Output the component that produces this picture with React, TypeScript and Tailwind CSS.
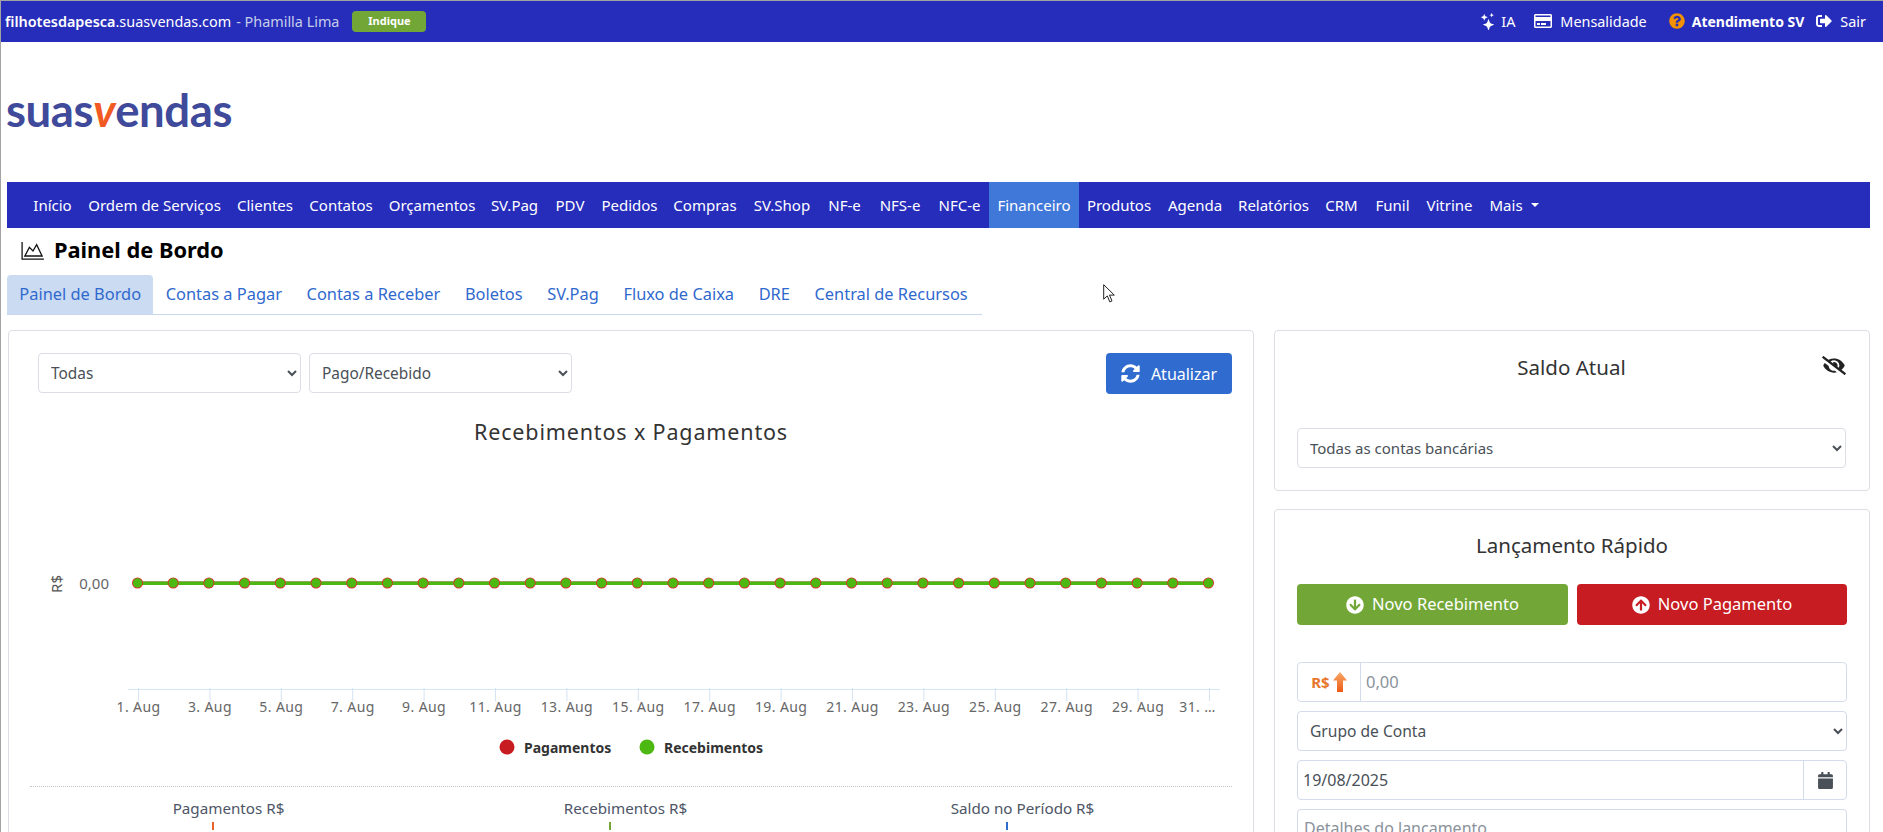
import { BsStars } from 'react-icons/bs'
import {
  FaArrowCircleDown,
  FaArrowCircleUp,
  FaCalendar,
  FaEyeSlash,
  FaQuestionCircle,
  FaRegCreditCard,
  FaSignOutAlt,
  FaSyncAlt,
} from 'react-icons/fa'

const menu = [
  { label: 'Início', width: 'w-[55px]' },
  { label: 'Ordem de Serviços', width: 'w-[149px]' },
  { label: 'Clientes', width: 'w-[72px]' },
  { label: 'Contatos', width: 'w-[80px]' },
  { label: 'Orçamentos', width: 'w-[102px]' },
  { label: 'SV.Pag', width: 'w-[63px]' },
  { label: 'PDV', width: 'w-[48px]' },
  { label: 'Pedidos', width: 'w-[71px]' },
  { label: 'Compras', width: 'w-[80px]' },
  { label: 'SV.Shop', width: 'w-[74px]' },
  { label: 'NF-e', width: 'w-[51px]' },
  { label: 'NFS-e', width: 'w-[60px]' },
  { label: 'NFC-e', width: 'w-[59px]' },
  { label: 'Financeiro', width: 'w-[90px]' },
  { label: 'Produtos', width: 'w-[80px]' },
  { label: 'Agenda', width: 'w-[72px]' },
  { label: 'Relatórios', width: 'w-[85px]' },
  { label: 'CRM', width: 'w-[51px]' },
  { label: 'Funil', width: 'w-[51px]' },
  { label: 'Vitrine', width: 'w-[63px]' },
]
const tabs = ['Painel de Bordo', 'Contas a Pagar', 'Contas a Receber', 'Boletos', 'SV.Pag', 'Fluxo de Caixa', 'DRE', 'Central de Recursos']

const days = Array.from({ length: 31 }, (_, i) => i + 1)
const dayX = (d: number) => 137.5 + (d - 1) * 35.7

function Chart() {
  return (
    <svg viewBox="9 394 1244 392" className="block h-[392px] w-[1244px]">
      <text x="631" y="440" textAnchor="middle" fontSize="21.5" letterSpacing="0.85" fill="#333">Recebimentos x Pagamentos</text>
      <text x="0" y="0" transform="translate(62 584) rotate(-90)" textAnchor="middle" fontSize="15" fill="#555">R$</text>
      <text x="109" y="589" textAnchor="end" fontSize="15" fill="#666">0,00</text>
      <line x1="128" y1="689.5" x2="1220" y2="689.5" stroke="#d5e8f4" />
      {days.filter((d) => d % 2 === 1).map((d) => {
        const x = 138.5 + ((d - 1) / 2) * 71.4
        return (
          <g key={d}>
            <line x1={x} y1="688" x2={x} y2="701" stroke="#d5e3f4" />
            <text x={d === 31 ? x - 12 : x} y="712" textAnchor="middle" fontSize="14" letterSpacing="0.4" fill="#666">{d === 31 ? '31. …' : `${d}. Aug`}</text>
          </g>
        )
      })}
      <line x1={dayX(1)} y1="581.500" x2={dayX(31)} y2="581.500" stroke="#8fa558" strokeWidth="1" />
      <line x1={dayX(1)} y1="583.500" x2={dayX(31)} y2="583.500" stroke="#4db811" strokeWidth="3" />
      {days.map((d) => (
        <g key={d}>
          <circle cx={dayX(d)} cy="583" r="5.5" fill="#e02830" />
          <circle cx={dayX(d)} cy="583" r="4.7" fill="#4db811" />
        </g>
      ))}
      <circle cx="507" cy="747" r="7.5" fill="#c71c22" />
      <text x="524" y="753" fontSize="14" fontWeight="700" fill="#333">Pagamentos</text>
      <circle cx="647" cy="747" r="7.5" fill="#4db811" />
      <text x="664" y="753" fontSize="14" fontWeight="700" fill="#333">Recebimentos</text>
    </svg>
  )
}

function Stat({ label, color }: { label: string; color: string }) {
  return (
    <div className="flex flex-col items-center">
      <span className="text-[15.200px] leading-[22px] text-[#4d5566]">{label}</span>
      <span className={`mt-[3px] h-[8px] w-[2px] -translate-x-[16px] ${color}`} />
    </div>
  )
}

export default function App() {
  return (
    <div className="relative h-[832px] overflow-hidden border-l border-t border-[#a3a3a3] bg-white font-['Noto_Sans',sans-serif] text-[15px] text-[#333]">
      {/* Barra do topo */}
      <div className="flex h-[41px] items-center justify-between bg-[#272dbb] pl-[4px] pr-[17px] text-[14.400px] text-white">
        <div className="flex items-center">
          <b className="font-semibold">filhotesdapesca</b>
          <span>.suasvendas.com</span>
          <span className="ml-[5px] text-[#c6cdea]">- Phamilla Lima</span>
          <span className="ml-[13px] flex h-[21px] w-[74px] items-center justify-center rounded-[4px] bg-[#72a737] text-[11px] font-bold">Indique</span>
        </div>
        <div className="flex items-center">
          <BsStars className="h-[17px] w-[17px]" />
          <span className="ml-[4px]">IA</span>
          <FaRegCreditCard className="ml-[19px] h-[18px] w-[18px]" />
          <span className="ml-[8px]">Mensalidade</span>
          <FaQuestionCircle className="ml-[22px] h-[16px] w-[16px] text-[#f39200]" />
          <span className="ml-[7px] text-[14px] font-bold">Atendimento SV</span>
          <FaSignOutAlt className="ml-[12px] h-[16px] w-[16px]" />
          <span className="ml-[8px]">Sair</span>
        </div>
      </div>

      {/* Logo */}
      <div className="flex h-[140px] items-center pl-[5px] pb-[4px]">
        <span className="font-['Lato',sans-serif] text-[45.500px] font-bold leading-none tracking-[-0.4px] text-[#3f4a9b]">
          suas<span className="italic text-[#f15a22]">v</span>endas
        </span>
      </div>

      {/* Menu principal */}
      <nav className="ml-[6px] flex h-[46px] w-[1863px] items-stretch bg-[#272dbb] pl-[18px] text-white">
        {menu.map((item) => (
          <a key={item.label} className={`flex items-center justify-center ${item.width} ${item.label === 'Financeiro' ? 'bg-[#3f78d9]' : ''}`}>{item.label}</a>
        ))}
        <a className="flex items-center px-[8.500px]">
          Mais
          <span className="ml-[8px] h-0 w-0 border-x-[4px] border-t-[4px] border-x-transparent border-t-white" />
        </a>
      </nav>

      {/* Titulo */}
      <div className="flex h-[47px] items-center pb-[2px] pl-[19px]">
        <svg viewBox="0 0 26 22" className="h-[20px] w-[26px]" fill="none" stroke="#111" strokeWidth="1.4">
          <path d="M1 1v19h24" />
          <path d="M4 16.500 9 7l4 4 4-7 6 12.500z" />
        </svg>
        <h1 className="ml-[8px] text-[21.800px] font-bold text-black">Painel de Bordo</h1>
      </div>

      {/* Abas */}
      <div className="ml-[6px] flex h-[40px] w-[975px] items-stretch border-b border-[#c9d8ec] text-[16.400px] text-[#3069ce]">
        {tabs.map((t, i) => (
          <a key={t} className={`flex shrink-0 items-center whitespace-nowrap rounded-t-[4px] px-[12.300px] ${i === 0 ? 'bg-[#cadbf2]' : ''}`}>{t}</a>
        ))}
      </div>

      <div className="ml-[7px] mt-[15px] flex items-start gap-[20px]">
        {/* Painel esquerdo */}
        <div className="h-[600px] w-[1246px] shrink-0 rounded-[4px] border border-[#dcdee6]">
          <div className="flex items-start justify-between pl-[29px] pr-[21px] pt-[22px]">
            <div className="flex gap-[8px]">
              <select className="h-[40px] w-[263px] rounded-[4px] border border-[#dcdee6] bg-white pl-[8px] text-[15.400px] text-[#495057]">
                <option>Todas</option>
              </select>
              <select className="h-[40px] w-[263px] rounded-[4px] border border-[#dcdee6] bg-white pl-[8px] text-[15.400px] text-[#495057]">
                <option>Pago/Recebido</option>
              </select>
            </div>
            <button className="flex h-[41px] w-[126px] items-center justify-center gap-[11px] rounded-[4px] bg-[#306bcf] text-[16px] text-white">
              <FaSyncAlt className="h-[19px] w-[19px]" />
              Atualizar
            </button>
          </div>
          <Chart />
          <div className="mx-[21px] border-t border-dotted border-[#c4c4c4]">
            <div className="grid w-[1191px] grid-cols-3 pt-[10px]">
              <Stat label="Pagamentos R$" color="bg-[#e8622a]" />
              <Stat label="Recebimentos R$" color="bg-[#72a737]" />
              <Stat label="Saldo no Período R$" color="bg-[#306bcf]" />
            </div>
          </div>
        </div>

        {/* Coluna direita */}
        <div className="flex w-[596px] shrink-0 flex-col gap-[18px]">
          <div className="rounded-[4px] border border-[#dcdee6] pb-[22px] pl-[22px] pr-[23px] pt-[23px]">
            <div className="grid grid-cols-[1fr_auto_1fr] items-start">
              <span />
              <h2 className="text-[20.500px] leading-[27px]">Saldo Atual</h2>
              <FaEyeSlash className="mt-[2px] h-[19px] w-[24px] justify-self-end text-[#222]" />
            </div>
            <select className="mt-[47px] h-[40px] w-full rounded-[4px] border border-[#dcdee6] bg-white pl-[8px] text-[#495057]">
              <option>Todas as contas bancárias</option>
            </select>
          </div>

          <div className="h-[400px] rounded-[4px] border border-[#dcdee6] px-[22px] pt-[21px]">
            <h2 className="text-center text-[20.500px] leading-[28px]">Lançamento Rápido</h2>
            <div className="mt-[25px] flex gap-[9px] text-[16.500px]">
              <button className="flex h-[41px] w-[271px] items-center justify-center gap-[8px] rounded-[4px] bg-[#72a737] text-white">
                <FaArrowCircleDown className="h-[18px] w-[18px]" />
                Novo Recebimento
              </button>
              <button className="flex h-[41px] w-[270px] items-center justify-center gap-[8px] rounded-[4px] bg-[#c71c22] text-white">
                <FaArrowCircleUp className="h-[18px] w-[18px]" />
                Novo Pagamento
              </button>
            </div>

            <div className="mt-[37px] flex h-[40px] items-stretch rounded-[4px] border border-[#d3dcea]">
              <div className="flex w-[63px] items-center justify-center gap-[3px] border-r border-[#d3dcea]">
                <span className="text-[15px] font-bold text-[#e8762c]">R$</span>
                <svg viewBox="0 0 14 20" className="h-[20px] w-[14px]">
                  <defs>
                    <linearGradient id="seta" x1="0" y1="0" x2="0" y2="1">
                      <stop offset="0" stopColor="#f8a868" />
                      <stop offset="1" stopColor="#ee5a14" />
                    </linearGradient>
                  </defs>
                  <path d="M7 0l7 8.500H10V20H4V8.500H0z" fill="url(#seta)" />
                </svg>
              </div>
              <input placeholder="0,00" className="min-w-0 flex-1 pl-[5px] text-[16.500px] outline-none placeholder:text-[#8a929b]" />
            </div>
            <select className="mt-[9px] h-[40px] w-full rounded-[4px] border border-[#d3dcea] bg-white pl-[8px] text-[15.600px] text-[#495057]">
              <option>Grupo de Conta</option>
            </select>
            <div className="mt-[9px] flex h-[40px] items-stretch rounded-[4px] border border-[#d3dcea]">
              <input defaultValue="19/08/2025" className="min-w-0 flex-1 pl-[5px] text-[16px] text-[#495057] outline-none" />
              <div className="flex w-[43px] items-center justify-center border-l border-[#d3dcea]">
                <FaCalendar className="h-[17px] w-[15px] text-[#495057]" />
              </div>
            </div>
            <textarea placeholder="Detalhes do lançamento" className="mt-[9px] block h-[70px] w-full resize-none rounded-[4px] border border-[#d3dcea] px-[6px] py-[6px] text-[16px] outline-none placeholder:text-[#8a929b]" />
          </div>
        </div>
      </div>

      {/* Ponteiro do mouse */}
      <svg viewBox="0 0 12 19" className="absolute left-[1102px] top-[283px] h-[19px] w-[12px]" fill="#fff" stroke="#222" strokeWidth="1">
        <path d="M.7.700v14.500l3.600-3.300 2.500 6 2.200-1-2.500-5.800h4.800z" />
      </svg>
    </div>
  )
}
